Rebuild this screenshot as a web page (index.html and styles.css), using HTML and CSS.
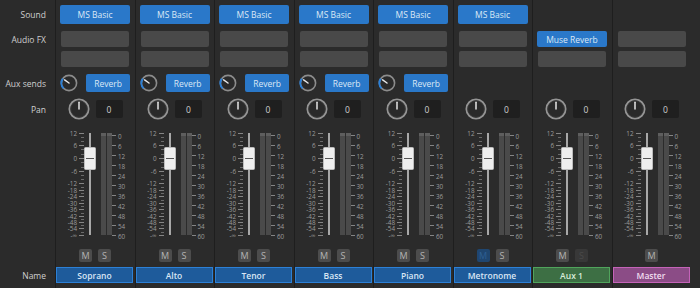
FILE: index.html
```html
<!DOCTYPE html>
<html>
<head>
<meta charset="utf-8">
<link rel="stylesheet" href="styles.css">
</head>
<body>
<svg class="defs" width="0" height="0" aria-hidden="true">
  <defs>
    <symbol id="knob-aux" viewBox="0 0 18 18">
      <circle cx="9" cy="9" r="7.6" fill="#2a2a2a" stroke="#8c8c8c" stroke-width="1.6"/>
      <path d="M3.6 14.4 A7.6 7.6 0 0 1 2.8 4.6" fill="none" stroke="#2b80d8" stroke-width="2"/>
      <line x1="9" y1="9" x2="4.6" y2="5.9" stroke="#e6e6e6" stroke-width="1.5" stroke-linecap="round"/>
    </symbol>
    <symbol id="knob-pan" viewBox="0 0 22 22">
      <circle cx="11" cy="11" r="9.6" fill="#2a2a2a" stroke="#959595" stroke-width="1.9"/>
      <circle cx="11" cy="11" r="8.3" fill="none" stroke="#3c3c3c" stroke-width="0.8"/>
      <line x1="11" y1="11" x2="11" y2="4.2" stroke="#e6e6e6" stroke-width="1.5" stroke-linecap="round"/>
    </symbol>
  </defs>
</svg>
<div class="mixer">
  <div class="labels col">
    <div class="r-sound lbl">Sound</div>
    <div class="r-fx1 lbl">Audio FX</div>
    <div class="r-fx2"></div>
    <div class="r-aux lbl">Aux sends</div>
    <div class="r-pan lbl">Pan</div>
    <div class="r-fader"></div>
    <div class="r-ms"></div>
    <div class="r-name lbl">Name</div>
  </div>

  <div class="strip col">
    <div class="r-sound"><div class="btn">MS Basic</div></div>
    <div class="r-fx1"><div class="slot"></div></div>
    <div class="r-fx2"><div class="slot"></div></div>
    <div class="r-aux"><svg class="knob-aux"><use href="#knob-aux"/></svg><div class="btn btn-aux">Reverb</div></div>
    <div class="r-pan"><svg class="knob-pan"><use href="#knob-pan"/></svg><div class="pan-val">0</div></div>
    <div class="r-fader fader"></div>
    <div class="r-ms"><div class="ms">M</div><div class="ms">S</div></div>
    <div class="r-name name name-blue">Soprano</div>
  </div>

  <div class="strip col">
    <div class="r-sound"><div class="btn">MS Basic</div></div>
    <div class="r-fx1"><div class="slot"></div></div>
    <div class="r-fx2"><div class="slot"></div></div>
    <div class="r-aux"><svg class="knob-aux"><use href="#knob-aux"/></svg><div class="btn btn-aux">Reverb</div></div>
    <div class="r-pan"><svg class="knob-pan"><use href="#knob-pan"/></svg><div class="pan-val">0</div></div>
    <div class="r-fader fader"></div>
    <div class="r-ms"><div class="ms">M</div><div class="ms">S</div></div>
    <div class="r-name name name-blue">Alto</div>
  </div>

  <div class="strip col">
    <div class="r-sound"><div class="btn">MS Basic</div></div>
    <div class="r-fx1"><div class="slot"></div></div>
    <div class="r-fx2"><div class="slot"></div></div>
    <div class="r-aux"><svg class="knob-aux"><use href="#knob-aux"/></svg><div class="btn btn-aux">Reverb</div></div>
    <div class="r-pan"><svg class="knob-pan"><use href="#knob-pan"/></svg><div class="pan-val">0</div></div>
    <div class="r-fader fader"></div>
    <div class="r-ms"><div class="ms">M</div><div class="ms">S</div></div>
    <div class="r-name name name-blue">Tenor</div>
  </div>

  <div class="strip col">
    <div class="r-sound"><div class="btn">MS Basic</div></div>
    <div class="r-fx1"><div class="slot"></div></div>
    <div class="r-fx2"><div class="slot"></div></div>
    <div class="r-aux"><svg class="knob-aux"><use href="#knob-aux"/></svg><div class="btn btn-aux">Reverb</div></div>
    <div class="r-pan"><svg class="knob-pan"><use href="#knob-pan"/></svg><div class="pan-val">0</div></div>
    <div class="r-fader fader"></div>
    <div class="r-ms"><div class="ms">M</div><div class="ms">S</div></div>
    <div class="r-name name name-blue">Bass</div>
  </div>

  <div class="strip col">
    <div class="r-sound"><div class="btn">MS Basic</div></div>
    <div class="r-fx1"><div class="slot"></div></div>
    <div class="r-fx2"><div class="slot"></div></div>
    <div class="r-aux"><svg class="knob-aux"><use href="#knob-aux"/></svg><div class="btn btn-aux">Reverb</div></div>
    <div class="r-pan"><svg class="knob-pan"><use href="#knob-pan"/></svg><div class="pan-val">0</div></div>
    <div class="r-fader fader"></div>
    <div class="r-ms"><div class="ms">M</div><div class="ms">S</div></div>
    <div class="r-name name name-blue">Piano</div>
  </div>

  <div class="strip col">
    <div class="r-sound"><div class="btn">MS Basic</div></div>
    <div class="r-fx1"><div class="slot"></div></div>
    <div class="r-fx2"><div class="slot"></div></div>
    <div class="r-aux"></div>
    <div class="r-pan"><svg class="knob-pan"><use href="#knob-pan"/></svg><div class="pan-val">0</div></div>
    <div class="r-fader fader"></div>
    <div class="r-ms"><div class="ms ms-dim-blue">M</div><div class="ms">S</div></div>
    <div class="r-name name name-blue">Metronome</div>
  </div>

  <div class="strip col">
    <div class="r-sound"></div>
    <div class="r-fx1"><div class="btn">Muse Reverb</div></div>
    <div class="r-fx2"><div class="slot"></div></div>
    <div class="r-aux"></div>
    <div class="r-pan"><svg class="knob-pan"><use href="#knob-pan"/></svg><div class="pan-val">0</div></div>
    <div class="r-fader fader"></div>
    <div class="r-ms"><div class="ms">M</div><div class="ms ms-off">S</div></div>
    <div class="r-name name name-green">Aux 1</div>
  </div>

  <div class="strip col">
    <div class="r-sound"></div>
    <div class="r-fx1"><div class="slot"></div></div>
    <div class="r-fx2"><div class="slot"></div></div>
    <div class="r-aux"></div>
    <div class="r-pan"><svg class="knob-pan"><use href="#knob-pan"/></svg><div class="pan-val">0</div></div>
    <div class="r-fader fader"></div>
    <div class="r-ms"><div class="ms">M</div></div>
    <div class="r-name name name-purple">Master</div>
  </div>
</div>
<script src="script.js"></script>
</body>
</html>
```

FILE: styles.css
```css
* { box-sizing: border-box; }
html, body { margin: 0; padding: 0; }
body {
  width: 700px;
  height: 288px;
  overflow: hidden;
  background: #2b2b2b;
  font-family: "Open Sans", "Noto Sans", sans-serif;
  font-size: 8.5px;
  font-weight: 500;
  color: #cfcfcf;
}
.defs { position: absolute; }

.mixer {
  display: grid;
  grid-template-columns: 55px repeat(8, 79.5px);
  height: 288px;
}
.col { display: flex; flex-direction: column; }
.col > div { flex-shrink: 0; }

.strip {
  border-left: 1px solid #1e1e1e;
  padding: 0 4.5px 0 4px;
}

/* rows */
.r-sound { margin-top: 5px; height: 19px; }
.r-fx1 { margin-top: 7px; height: 16px; }
.r-fx2 { margin-top: 4px; height: 16px; }
.r-aux { margin-top: 7px; height: 18px; }
.r-pan { margin-top: 8px; height: 18px; }
.r-fader { margin-top: 8px; height: 116px; }
.r-ms { margin-top: 7px; height: 13px; }
.r-name { margin-top: 5px; height: 16px; }

.lbl {
  display: flex;
  align-items: center;
  justify-content: flex-end;
  padding-right: 9px;
  white-space: nowrap;
}

/* buttons */
.btn {
  height: 100%;
  display: flex;
  align-items: center;
  justify-content: center;
  background: #2a78c9;
  color: #dbe8f6;
  border-radius: 2px;
  white-space: nowrap;
}
.slot {
  height: 100%;
  margin: 0 1px;
  background: #494949;
  border-radius: 2px;
}

.strip .r-aux { display: flex; align-items: center; gap: 8px; }
.knob-aux { width: 18px; height: 18px; flex: none; }
.btn-aux { width: 44px; height: 18px; }

.strip .r-pan { display: flex; align-items: center; justify-content: center; gap: 6px; }
.knob-pan { width: 22px; height: 22px; flex: none; }
.pan-val {
  width: 27px;
  height: 18px;
  background: #1f1f1f;
  border-radius: 2px;
  display: flex;
  align-items: center;
  justify-content: center;
  color: #d0d0d0;
}

/* fader */
.fader {
  margin-left: -4px;
  margin-right: -4.5px;
  display: flex;
  font-size: 6.3px;
  font-weight: 400;
  color: #9c9c9c;
}
.scale-l { position: relative; width: 28px; flex: none; }
.scale-l .lab { position: absolute; right: 7px; transform: translateY(-50%); line-height: 6px; height: 6px; }
.scale-l .tk { position: absolute; right: 0; width: 5px; height: 1px; background: #858585; }
.scale-l .tk.mn { width: 3px; background: #6a6a6a; }
.fcol { position: relative; width: 12px; flex: none; }
.track {
  position: absolute;
  left: 5px;
  top: 7px;
  width: 2px;
  height: 102px;
  background: #a8a8a8;
}
.handle {
  position: absolute;
  left: 0;
  top: 21px;
  width: 12px;
  height: 23px;
  background: #eeeeee;
  border: 1px solid #bdbdbd;
  border-radius: 1.5px;
}
.handle::after {
  content: "";
  position: absolute;
  left: 1px;
  right: 1px;
  top: 10px;
  height: 1px;
  background: #555;
}
.meter {
  margin-left: 5px;
  margin-top: 7px;
  height: 102px;
  display: flex;
  gap: 1px;
  flex: none;
}
.meter i {
  width: 5px;
  background: linear-gradient(#5e5e5e 0 3px, #4a4a4a 3px);
}
.scale-r { position: relative; flex: 1; }
.scale-r .lab { position: absolute; left: 6px; transform: translateY(-50%); line-height: 7px; height: 7px; }
.scale-r .tk { position: absolute; left: 0; width: 4px; height: 1px; background: #858585; }

/* mute / solo */
.strip .r-ms { display: flex; justify-content: center; gap: 6px; }
.ms {
  width: 13px;
  height: 13px;
  background: #4c4c4c;
  color: #b4b4b4;
  border-radius: 2px;
  font-size: 9px;
  font-weight: 400;
  display: flex;
  align-items: center;
  justify-content: center;
}
.ms-dim-blue { background: #1f4670; color: #2e5f93; }
.ms-off { background: #383838; color: #4a4a4a; }

/* names */
.name {
  margin-left: -4px;
  margin-right: -3px;
  display: flex;
  align-items: center;
  justify-content: center;
  font-weight: 600;
  border: 1px solid;
  white-space: nowrap;
}
.name-blue { background: #1e5b9b; border-color: #2c80d6; color: #d9e6f4; }
.name-green { background: #3d6f44; border-color: #50a45c; color: #d8ecd9; }
.name-purple { background: #8b4c86; border-color: #c463b8; color: #f1dff0; }
```

FILE: script.js
```js
(function () {
  var TOP = 126;
  var LEFT = [
    ['12', 133], ['6', 145], ['0', 158], ['-6', 171], ['-12', 183],
    ['-18', 190], ['-24', 196], ['-30', 203], ['-36', 209], ['-42', 216],
    ['-48', 222], ['-54', 228], ['-\u221E', 235]
  ];

  function scaleLeft() {
    var h = '';
    for (var i = 0; i < LEFT.length; i++) {
      var r = LEFT[i][1] - TOP;
      h += '<span class="lab" style="top:' + (r + 0.5) + 'px">' + LEFT[i][0] + '</span>';
      h += '<i class="tk" style="top:' + r + 'px"></i>';
      if (i < LEFT.length - 1) {
        var r2 = LEFT[i + 1][1] - TOP;
        var n = i < 4 ? 2 : 1;
        for (var k = 1; k <= n; k++) {
          var m = Math.round(r + (r2 - r) * k / (n + 1));
          h += '<i class="tk mn" style="top:' + m + 'px"></i>';
        }
      }
    }
    return h;
  }

  function scaleRight() {
    var h = '';
    for (var v = 0; v <= 60; v += 6) {
      var r = 135 - TOP + (v / 6) * 10;
      h += '<i class="tk" style="top:' + r + 'px"></i>';
      h += '<span class="lab" style="top:' + (r + 0.5) + 'px">' + v + '</span>';
    }
    return h;
  }

  var markup =
    '<div class="scale-l">' + scaleLeft() + '</div>' +
    '<div class="fcol"><div class="track"></div><div class="handle"></div></div>' +
    '<div class="meter"><i></i><i></i></div>' +
    '<div class="scale-r">' + scaleRight() + '</div>';

  var faders = document.querySelectorAll('.fader');
  for (var j = 0; j < faders.length; j++) faders[j].innerHTML = markup;
})();
```
